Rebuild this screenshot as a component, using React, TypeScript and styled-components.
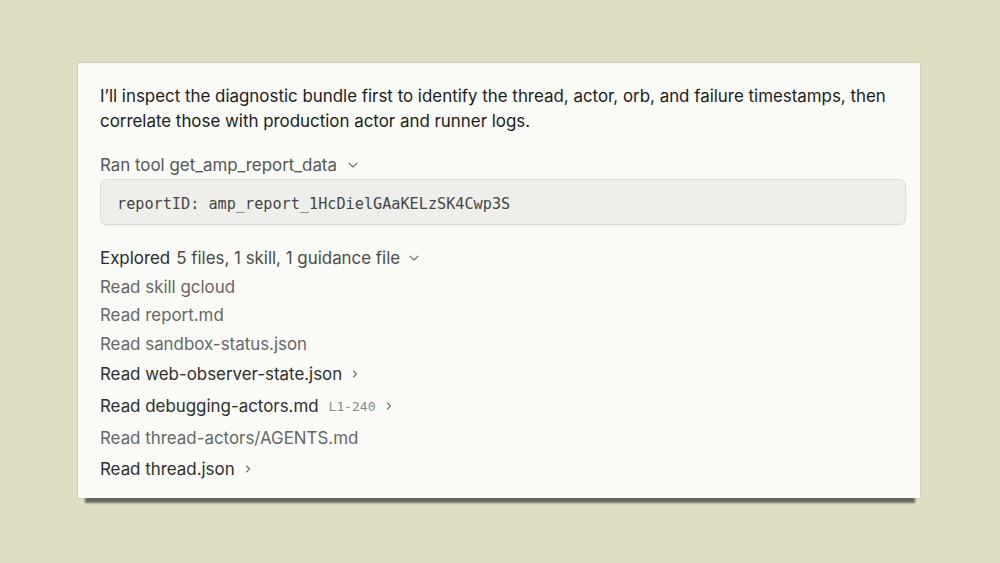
import React from "react";
import styled, { createGlobalStyle } from "styled-components";

const Global = createGlobalStyle`
  html, body { margin: 0; padding: 0; }
  body {
    background: #dfdec4;
    font-family: Inter, "Noto Sans", "Liberation Sans", sans-serif;
    -webkit-font-smoothing: antialiased;
  }
`;

const Page = styled.div`
  width: 1000px;
  height: 563px;
  box-sizing: border-box;
  padding: 63px 80px 0 78px;
`;

const Card = styled.div`
  width: 842px;
  height: 435px;
  box-sizing: border-box;
  background: #fafbf7;
  padding: 21px 14px 0 22px;
  box-shadow: 0 0 1.5px rgba(90, 90, 70, 0.35), 1px 11px 2px -6px rgba(85, 85, 78, 0.85);
  display: flex;
  flex-direction: column;
`;

const Paragraph = styled.p`
  margin: 0;
  font-size: 16.9px;
  line-height: 25px;
  color: #1b1b1b;
`;

const ToolHeader = styled.div`
  margin-top: 19px;
  height: 24px;
  display: flex;
  align-items: center;
  gap: 10px;
  font-size: 16.9px;
  color: #555;
`;

const CodeBox = styled.div`
  margin-top: 2px;
  height: 46px;
  box-sizing: border-box;
  background: #eeefeb;
  border: 1px solid #dcddd8;
  border-radius: 7px;
  box-shadow: 0 1px 1px rgba(0, 0, 0, 0.05);
  display: flex;
  align-items: center;
  padding: 3px 0 0 16px;
  font-family: "DejaVu Sans Mono", "Liberation Mono", monospace;
  font-size: 15.2px;
  color: #454545;
`;

const List = styled.div`
  margin-top: 18px;
  display: flex;
  flex-direction: column;
`;

const Row = styled.div<{ $h: number; $strong?: boolean }>`
  height: ${(p) => p.$h}px;
  display: flex;
  align-items: center;
  gap: 8px;
  font-size: 16.9px;
  color: ${(p) => (p.$strong ? "#2e2e2e" : "#666")};
`;

const Label = styled.span<{ $dark?: boolean }>`
  color: ${(p) => (p.$dark ? "#2b2b2b" : "inherit")};
`;

const Summary = styled.span`
  margin-left: -2px;
  color: #4a4a4a;
`;

const Range = styled.span`
  font-family: "DejaVu Sans Mono", "Liberation Mono", monospace;
  font-size: 13px;
  color: #8a8a8a;
  margin-left: 2px;
`;

const Chevron = styled.svg`
  flex: none;
  display: block;
`;

const ChevronDown = () => (
  <Chevron width="12" height="12" viewBox="0 0 12 12" fill="none">
    <path d="M2 4.2 L6 8 L10 4.2" stroke="#6b6b6b" strokeWidth="1.1" strokeLinecap="round" strokeLinejoin="round" />
  </Chevron>
);

const ChevronRight = () => (
  <Chevron width="10" height="12" viewBox="0 0 10 12" fill="none">
    <path d="M3.5 3 L6.5 6 L3.5 9" stroke="#6b6b6b" strokeWidth="1.1" strokeLinecap="round" strokeLinejoin="round" />
  </Chevron>
);

type Item = { text: string; strong?: boolean; range?: string; h: number };

const items: Item[] = [
  { text: "Read skill gcloud", h: 29 },
  { text: "Read report.md", h: 28.5 },
  { text: "Read sandbox-status.json", h: 29 },
  { text: "Read web-observer-state.json", strong: true, h: 31 },
  { text: "Read debugging-actors.md", strong: true, range: "L1-240", h: 33 },
  { text: "Read thread-actors/AGENTS.md", h: 31 },
  { text: "Read thread.json", strong: true, h: 31 },
];

export default function App() {
  return (
    <>
      <Global />
      <Page>
        <Card>
          <Paragraph>
            I’ll inspect the diagnostic bundle first to identify the thread, actor, orb, and failure timestamps, then
            correlate those with production actor and runner logs.
          </Paragraph>
          <ToolHeader>
            <span>Ran tool get_amp_report_data</span>
            <ChevronDown />
          </ToolHeader>
          <CodeBox>reportID: amp_report_1HcDielGAaKELzSK4Cwp3S</CodeBox>
          <List>
            <Row $h={29} $strong>
              <Label $dark>Explored</Label>
              <Summary>5 files, 1 skill, 1 guidance file</Summary>
              <ChevronDown />
            </Row>
            {items.map((it) => (
              <Row key={it.text} $h={it.h} $strong={it.strong}>
                <span>{it.text}</span>
                {it.range && <Range>{it.range}</Range>}
                {it.strong && <ChevronRight />}
              </Row>
            ))}
          </List>
        </Card>
      </Page>
    </>
  );
}
